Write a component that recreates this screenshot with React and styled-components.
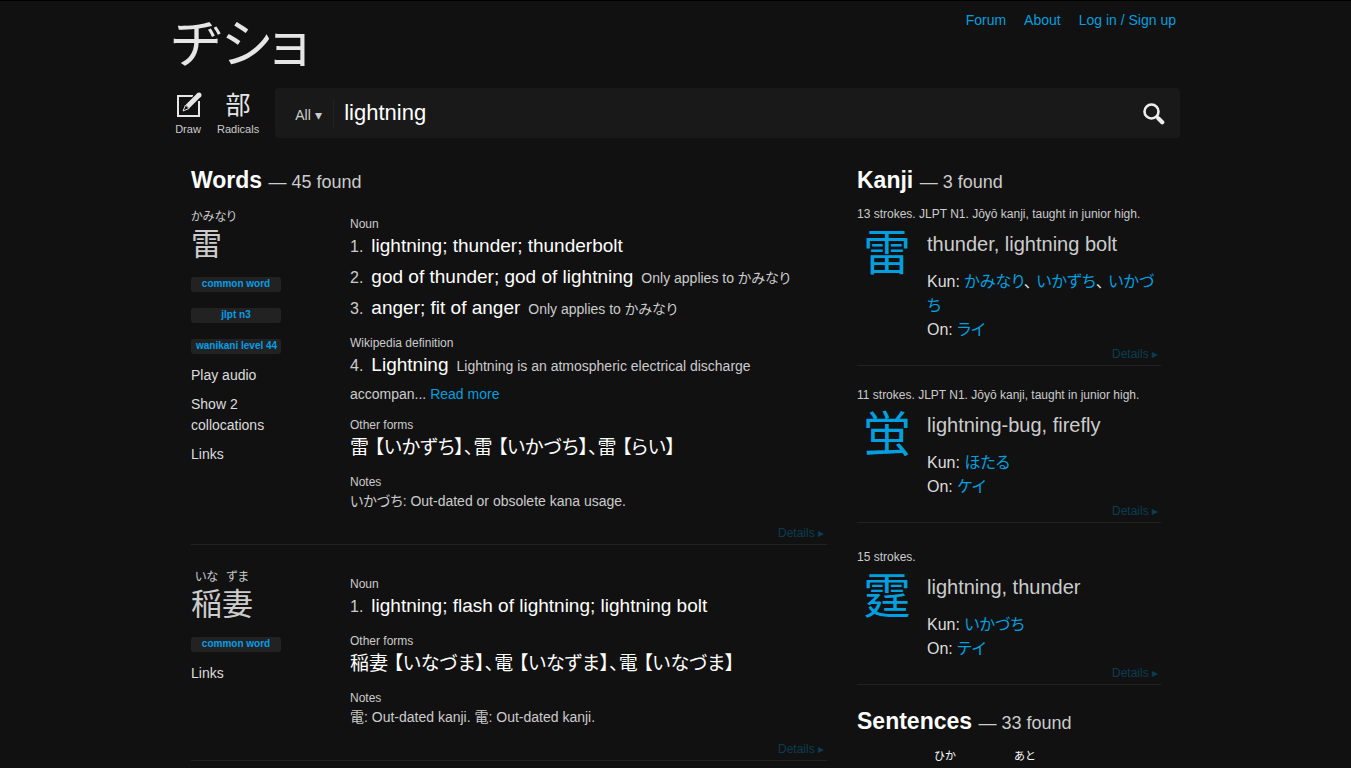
import React from "react";
import styled, { createGlobalStyle } from "styled-components";

const GlobalStyle = createGlobalStyle`
  *, *::before, *::after { box-sizing: border-box; }
  html { background: #111; scrollbar-width: none; }
  body {
    margin: 0;
    border-top: 1px solid #000;
    color: #ccc;
    font: 14px/21px "Liberation Sans", "Noto Sans CJK JP", sans-serif;
    font-feature-settings: "palt";
  }
  h1, h2, p, ul { margin: 0; padding: 0; }
  ul { list-style: none; }
  button, input, select {
    margin: 0;
    padding: 0;
    border: 0;
    background: none;
    color: inherit;
    font: inherit;
    font-feature-settings: inherit;
  }
  a { color: #009fdf; text-decoration: none; }
`;

const Page = styled.div`
  max-width: 1009px;
  margin: 0 auto;
`;

const Header = styled.header`
  display: flex;
  justify-content: space-between;
  align-items: flex-start;
`;

const Logo = styled.h1`
  font-size: 53px;
  line-height: 87px;
  font-weight: 400;
  a { color: #e6e6e6; }
`;

const Nav = styled.nav`
  display: flex;
  gap: 18px;
  padding: 9px 4px 0 0;
`;

const SearchRow = styled.form`
  display: flex;
  gap: 16px;
  height: 50px;
`;

const Tools = styled.div`
  display: flex;
  gap: 15px;
  padding-left: 3px;
`;

const Tool = styled.button`
  display: flex;
  flex-direction: column;
  align-items: center;
  color: #e6e6e6;
  cursor: pointer;
`;

const ToolIcon = styled.span`
  display: flex;
  align-items: center;
  height: 34px;
  font-size: 25px;
  line-height: 34px;
`;

const ToolLabel = styled.span`
  font-size: 11px;
  line-height: 14px;
  color: #ccc;
`;

const SearchBar = styled.div`
  flex: 1;
  display: flex;
  align-items: center;
  border-radius: 4px;
  background: #191919;
`;

const Scope = styled.label`
  display: flex;
  gap: 4px;
  width: 59px;
  padding: 6px 0 2px 20px;
  border-right: 1px solid #222;
  select { appearance: none; field-sizing: content; outline: none; }
`;

const Query = styled.input`
  flex: 1;
  min-width: 0;
  padding-left: 10px;
  color: #fff;
  font-size: 22px;
  line-height: 30px;
  outline: none;
`;

const SearchButton = styled.button`
  display: flex;
  padding: 4px 15px 2px;
  cursor: pointer;
`;

const Results = styled.main`
  display: grid;
  grid-template-columns: minmax(0, 1fr) 304px;
  gap: 30px;
  padding: 27px 19px 0 20px;
`;

const Heading = styled.h2`
  margin-bottom: 11px;
  color: #fff;
  font-size: 23px;
  line-height: 30px;
  span { color: #ccc; font-size: 18px; font-weight: 400; line-height: 1; }
`;

const WordEntry = styled.article`
  display: grid;
  grid-template-columns: 94px minmax(0, 1fr);
  column-gap: 65px;
  padding: ${(p) => (p.$first ? 3 : 24)}px 0 3px;
  border-bottom: 1px solid #222;
`;

const Furigana = styled.div`
  display: flex;
  font-size: 12px;
  line-height: 16px;
  span { min-width: 31px; text-align: center; }
`;

const Headword = styled.div`
  font-size: 31px;
  line-height: 40px;
`;

const Tags = styled.div`
  display: flex;
  flex-direction: column;
  gap: 16px;
  padding: 12px 0 11px;
`;

const Tag = styled.div`
  width: 90px;
  height: 15px;
  padding: 0 5px;
  border-radius: 3px;
  background: #222;
  color: #009fe8;
  font-size: 10px;
  line-height: 13px;
  font-weight: 700;
  text-align: center;
  white-space: nowrap;
`;

const WordLinks = styled.ul`
  li { margin-bottom: 8px; }
  a { color: #ddd; }
`;

const Meanings = styled.div`
  padding-top: 6px;
`;

const Label = styled.div`
  font-size: 12px;
  line-height: 18px;
`;

const Senses = styled.div`
  display: flex;
  flex-direction: column;
  gap: 3px;
  padding-bottom: ${(p) => (p.$wiki ? 8 : 11)}px;
`;

const Sense = styled.p`
  line-height: 28px;
`;

const SenseNumber = styled.span`
  margin-right: 8px;
  font-size: 16px;
  line-height: 1;
`;

const SenseText = styled.span`
  margin-right: 8px;
  color: #fff;
  font-size: 19px;
  line-height: 1;
`;

const Forms = styled.p`
  margin-bottom: 11px;
  color: #fff;
  font-size: 19px;
  line-height: 28px;
`;

const DetailsRow = styled.div`
  grid-column: 1 / -1;
  padding: ${(p) => (p.$wide ? 13 : 4)}px 3px 0 0;
  text-align: right;
  font-size: 12px;
  line-height: 16px;
  a { opacity: 0.3; }
`;

const KanjiItem = styled.li`
  min-height: 162px;
  padding-bottom: 21px;
  &:last-child { min-height: 0; }
`;

const KanjiEntry = styled.article`
  display: grid;
  grid-template-columns: 70px minmax(0, 1fr);
  padding-bottom: 3px;
  border-bottom: 1px solid #222;
`;

const KanjiInfo = styled.div`
  grid-column: 1 / -1;
  margin-bottom: 8px;
  font-size: 12px;
  line-height: 16px;
`;

const KanjiGlyph = styled.a`
  padding-left: 6px;
  font-size: 48px;
  line-height: 48px;
`;

const KanjiMeaning = styled.div`
  margin-bottom: 12px;
  font-size: 20px;
  line-height: 28px;
`;

const Reading = styled.div`
  color: #ddd;
  font-size: 16px;
  line-height: 24px;
`;

const Sentence = styled.p`
  display: flex;
  align-items: flex-end;
  font-size: 16px;
  line-height: 28px;
  color: #fff;
  font-feature-settings: normal;
  white-space: nowrap;
`;

const Piece = styled.span`
  display: flex;
  flex-direction: column;
  align-items: center;
  width: ${(p) => p.$chars}em;
  small { font-size: 11px; line-height: 18px; }
`;

const PenIcon = () => (
  <svg width="28" height="28" viewBox="0 0 28 28" aria-hidden="true">
    <path d="M19 5H4v20h21V10" fill="none" stroke="#e6e6e6" strokeWidth="2" />
    <path d="M25 4L12 17" stroke="#111" strokeWidth="7" strokeLinecap="round" />
    <path d="M25 4L13.500 15.500" stroke="#e6e6e6" strokeWidth="5" />
    <circle cx="25" cy="4" r="2.500" fill="#e6e6e6" />
    <path d="M11.500 14l3.500 3.500L9 20z" fill="#111" stroke="#e6e6e6" strokeWidth="1" strokeLinejoin="round" />
  </svg>
);

const SearchIcon = () => (
  <svg width="22" height="22" viewBox="0 0 22 22" fill="none" stroke="#eee" aria-hidden="true">
    <circle cx="8.500" cy="8.500" r="7" strokeWidth="2.600" />
    <path d="M13.500 13.500l1.500 1.500" strokeWidth="3" />
    <path d="M15.500 15.500l3.700 3.700" strokeWidth="4.200" strokeLinecap="round" />
  </svg>
);

const words = [
  {
    word: "雷",
    furigana: ["かみなり"],
    tags: ["common word", "jlpt n3", "wanikani level 44"],
    links: ["Play audio", "Show 2 collocations", "Links"],
    senses: [
      { text: "lightning; thunder; thunderbolt" },
      { text: "god of thunder; god of lightning", note: "Only applies to かみなり" },
      { text: "anger; fit of anger", note: "Only applies to かみなり" },
    ],
    wikipedia: {
      text: "Lightning",
      note: "Lightning is an atmospheric electrical discharge accompan... ",
    },
    forms: "雷 【いかずち】、雷 【いかづち】、雷 【らい】",
    notes: "いかづち: Out-dated or obsolete kana usage.",
  },
  {
    word: "稲妻",
    furigana: ["いな", "ずま"],
    tags: ["common word"],
    links: ["Links"],
    senses: [{ text: "lightning; flash of lightning; lightning bolt" }],
    forms: "稲妻 【いなづま】、電 【いなずま】、電 【いなづま】",
    notes: "電: Out-dated kanji. 電: Out-dated kanji.",
  },
];

const kanji = [
  {
    glyph: "雷",
    info: "13 strokes. JLPT N1. Jōyō kanji, taught in junior high.",
    meaning: "thunder, lightning bolt",
    kun: ["かみなり", "いかずち", "いかづち"],
    on: "ライ",
  },
  {
    glyph: "蛍",
    info: "11 strokes. JLPT N1. Jōyō kanji, taught in junior high.",
    meaning: "lightning-bug, firefly",
    kun: ["ほたる"],
    on: "ケイ",
  },
  {
    glyph: "霆",
    info: "15 strokes.",
    meaning: "lightning, thunder",
    kun: ["いかづち"],
    on: "テイ",
  },
];

const sentence = [
  { text: "いなずまが" },
  { text: "光", ruby: "ひか" },
  { text: "ったすぐ" },
  { text: "後", ruby: "あと" },
  { text: "に" },
];

const Word = ({ entry, first }) => (
  <WordEntry $first={first}>
    <div>
      <Furigana>
        {entry.furigana.map((f) => <span key={f}>{f}</span>)}
      </Furigana>
      <Headword>{entry.word}</Headword>
      <Tags>
        {entry.tags.map((t) => <Tag key={t}>{t}</Tag>)}
      </Tags>
      <WordLinks>
        {entry.links.map((l) => <li key={l}><a href="#word">{l}</a></li>)}
      </WordLinks>
    </div>
    <Meanings>
      <Label>Noun</Label>
      <Senses>
        {entry.senses.map((s, i) => (
          <Sense key={s.text}>
            <SenseNumber>{i + 1}.</SenseNumber>
            <SenseText>{s.text}</SenseText>
            {s.note}
          </Sense>
        ))}
      </Senses>
      {entry.wikipedia && (
        <>
          <Label>Wikipedia definition</Label>
          <Senses $wiki>
            <Sense>
              <SenseNumber>{entry.senses.length + 1}.</SenseNumber>
              <SenseText>{entry.wikipedia.text}</SenseText>
              {entry.wikipedia.note}
              <a href="#wikipedia">Read more</a>
            </Sense>
          </Senses>
        </>
      )}
      <Label>Other forms</Label>
      <Forms>{entry.forms}</Forms>
      <Label>Notes</Label>
      <p>{entry.notes}</p>
    </Meanings>
    <DetailsRow $wide><a href="#details">Details ▸</a></DetailsRow>
  </WordEntry>
);

export default function App() {
  return (
    <>
      <GlobalStyle />
      <Page>
        <Header>
          <Logo><a href="#home">ヂショ</a></Logo>
          <Nav>
            <a href="#forum">Forum</a>
            <a href="#about">About</a>
            <a href="#login">Log in / Sign up</a>
          </Nav>
        </Header>
        <SearchRow onSubmit={(e) => e.preventDefault()}>
          <Tools>
            <Tool type="button">
              <ToolIcon><PenIcon /></ToolIcon>
              <ToolLabel>Draw</ToolLabel>
            </Tool>
            <Tool type="button">
              <ToolIcon>部</ToolIcon>
              <ToolLabel>Radicals</ToolLabel>
            </Tool>
          </Tools>
          <SearchBar>
            <Scope>
              <select aria-label="Search in" defaultValue="All">
                <option>All</option>
              </select>
              <span aria-hidden="true">▾</span>
            </Scope>
            <Query type="text" aria-label="Search" defaultValue="lightning" />
            <SearchButton type="submit" aria-label="Search"><SearchIcon /></SearchButton>
          </SearchBar>
        </SearchRow>
        <Results>
          <section>
            <Heading>Words <span>— 45 found</span></Heading>
            {words.map((w, i) => <Word key={w.word} entry={w} first={i === 0} />)}
          </section>
          <aside>
            <Heading>Kanji <span>— 3 found</span></Heading>
            <ul>
              {kanji.map((k) => (
                <KanjiItem key={k.glyph}>
                  <KanjiEntry>
                    <KanjiInfo>{k.info}</KanjiInfo>
                    <KanjiGlyph href="#kanji">{k.glyph}</KanjiGlyph>
                    <div>
                      <KanjiMeaning>{k.meaning}</KanjiMeaning>
                      <Reading>
                        Kun:{" "}
                        {k.kun.map((r, n) => (
                          <React.Fragment key={r}>
                            {n > 0 && "、 "}
                            <a href="#reading">{r}</a>
                          </React.Fragment>
                        ))}
                      </Reading>
                      <Reading>On: <a href="#reading">{k.on}</a></Reading>
                    </div>
                    <DetailsRow><a href="#details">Details ▸</a></DetailsRow>
                  </KanjiEntry>
                </KanjiItem>
              ))}
            </ul>
            <Heading>Sentences <span>— 33 found</span></Heading>
            <Sentence lang="ja">
              {sentence.map((s) => (
                <Piece key={s.text} $chars={s.text.length}>
                  {s.ruby && <small>{s.ruby}</small>}
                  {s.text}
                </Piece>
              ))}
            </Sentence>
          </aside>
        </Results>
      </Page>
    </>
  );
}
